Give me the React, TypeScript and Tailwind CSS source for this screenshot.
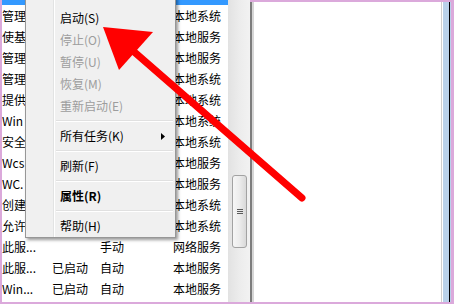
import React from 'react';

// 服务列表 + 右键菜单 + 红色箭头标注
// 菜单盖住的行只保留露出来的部分（名称前两个字 + 登录身份）
const rows: [string, string, string, string][] = [
    ['管理', '', '', '本地系统'],
    ['使基', '', '', '本地服务'],
    ['管理', '', '', '本地服务'],
    ['管理', '', '', '本地系统'],
    ['提供', '', '', '本地系统'],
    ['Win', '', '', '本地系统'],
    ['安全', '', '', '本地系统'],
    ['Wcs', '', '', '本地服务'],
    ['WC.', '', '', '本地服务'],
    ['创建', '', '', '本地系统'],
    ['允许', '', '', '本地系统'],
    ['此服...', '', '手动', '网络服务'],
    ['此服...', '已启动', '自动', '本地服务'],
    ['Win...', '已启动', '自动', '本地服务'],
];

type MenuEntry = { label: string; disabled?: boolean; bold?: boolean; sub?: boolean } | 'sep';

const menu: MenuEntry[] = [
    { label: '启动(S)' },
    { label: '停止(O)', disabled: true },
    { label: '暂停(U)', disabled: true },
    { label: '恢复(M)', disabled: true },
    { label: '重新启动(E)', disabled: true },
    'sep',
    { label: '所有任务(K)', sub: true },
    'sep',
    { label: '刷新(F)' },
    'sep',
    { label: '属性(R)', bold: true },
    'sep',
    { label: '帮助(H)' },
];

const ContextMenu: React.FC = () => (
    <div className="absolute left-[25px] top-[-4px] w-[151px] h-[242px] border border-[#979797] bg-[#f0f0f0] shadow-[2px_2px_3px_rgba(0,0,0,0.4)] flex">
        {/* 左侧图标栏 */}
        <div className="w-[27px] shrink-0" />
        <div className="w-[1px] bg-[#e2e3e3]" />
        <div className="w-[1px] bg-white" />
        <div className="flex-1 flex flex-col pt-[10px] pl-[1px] pr-[2px]">
            {menu.map((m, i) =>
                m === 'sep' ? (
                    <div key={i} className="h-[8px] flex flex-col justify-center">
                        <div className="h-[1px] bg-[#e0e0e0]" />
                        <div className="h-[1px] bg-white" />
                    </div>
                ) : (
                    <div
                        key={i}
                        className={`h-[22px] flex items-center justify-between pl-[4px] pr-[8px] text-[12px] leading-[22px] ${
                            m.disabled ? 'text-[#9d9d9d]' : 'text-black'
                        } ${m.bold ? 'font-bold' : ''}`}
                    >
                        <span>{m.label}</span>
                        {m.sub && (
                            <svg width="4" height="7" viewBox="0 0 4 7">
                                <polygon points="0,0 4,3.5 0,7" fill="#000" />
                            </svg>
                        )}
                    </div>
                )
            )}
        </div>
    </div>
);

const App: React.FC = () => {
    return (
        <div className="w-[454px] h-[304px] bg-[#dba9db] flex pr-[3px] pb-[2px] overflow-hidden relative font-['Noto_Sans_CJK_SC','Microsoft_YaHei',sans-serif]">
            {/* 左：服务列表 + 滚动条 */}
            <div className="flex h-full pl-[2px] shrink-0">
                <div className="w-[226px] h-full bg-white overflow-hidden">
                    <div className="h-[21px] -mt-[16px] bg-[#3399ff]" />
                    {rows.map((r, i) => (
                        <div key={i} className="h-[21px] flex items-center text-[12px] leading-[21px] text-black whitespace-nowrap">
                            <div className={`${i < 11 ? 'w-[23px] mr-[27px]' : 'w-[50px]'} overflow-hidden`}>{r[0]}</div>
                            <div className="w-[48px]">{r[1]}</div>
                            <div className="w-[73px]">{r[2]}</div>
                            <div>{r[3]}</div>
                        </div>
                    ))}
                </div>
                <div className="w-[22px] h-full bg-gradient-to-r from-[#e2e2e2] via-[#ececec] to-[#f2f2f2] flex flex-col items-center pt-[175px] pl-[1px]">
                    <div className="w-[15px] h-[73px] rounded-[3px] border border-[#a2a2a2] bg-gradient-to-r from-[#f6f6f6] via-[#ececec] to-[#d9d9d9] flex flex-col items-center justify-center gap-[1px]">
                        <div className="w-[6px] h-[1px] bg-[#5a5a5a]" />
                        <div className="w-[6px] h-[1px] bg-[#5a5a5a]" />
                        <div className="w-[6px] h-[1px] bg-[#5a5a5a]" />
                    </div>
                </div>
            </div>

            {/* 右：空白区域 */}
            <div className="flex-1 flex pt-[2px] h-full">
                <div className="w-[2px] bg-[#7d7d7d]" />
                <div className="w-[2px] bg-[#d6d6d6]" />
                <div className="flex-1 bg-white" />
                <div className="w-[1px] bg-[#cfcfcf]" />
                <div className="w-[1px] bg-white" />
                <div className="w-[6px] bg-[#b9d1ea]" />
                <div className="w-[1px] bg-black" />
                <div className="w-[1px] bg-[#b9d1ea]" />
            </div>

            <ContextMenu />

            {/* 红色箭头 */}
            <svg className="absolute left-0 top-0 pointer-events-none" width="454" height="304" viewBox="0 0 454 304">
                <line x1="132" y1="50" x2="302" y2="198" stroke="#ff0000" strokeWidth="7" strokeLinecap="round" />
                <polygon points="103,27 153,32 119,70" fill="#ff0000" />
            </svg>
        </div>
    );
};

export default App;
